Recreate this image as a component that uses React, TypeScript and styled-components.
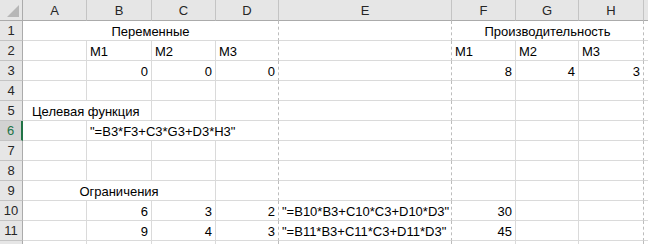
import React from 'react';
import styled, { createGlobalStyle, css } from 'styled-components';

type Align = 'left' | 'right' | 'center';

type CellData = {
    col: number;
    span?: number;
    text: string;
    align?: Align;
    indent?: number;
};

const GlobalStyle = createGlobalStyle`
html, body {
    margin: 0;
    padding: 0;
    background: #ffffff;
    overflow: hidden;
}
`;

const COLUMNS = ['A', 'B', 'C', 'D', 'E', 'F', 'G', 'H', 'I'];
const WIDTHS = [64, 65, 64, 63, 173, 64, 63, 65, 60];
// page break markers sit on the right edge of these columns
const DASHED = new Set([3, 4, 7]);
const ACTIVE_ROW = 6;
const VISIBLE_ROWS = 11;

const ROWS: CellData[][] = [
    [
        { col: 0, span: 4, text: 'Переменные', align: 'center' },
        { col: 5, span: 3, text: 'Производительность', align: 'center' },
    ],
    [
        { col: 1, text: 'M1' },
        { col: 2, text: 'M2' },
        { col: 3, text: 'M3' },
        { col: 5, text: 'M1' },
        { col: 6, text: 'M2' },
        { col: 7, text: 'M3' },
    ],
    [
        { col: 1, text: '0', align: 'right' },
        { col: 2, text: '0', align: 'right' },
        { col: 3, text: '0', align: 'right' },
        { col: 5, text: '8', align: 'right' },
        { col: 6, text: '4', align: 'right' },
        { col: 7, text: '3', align: 'right' },
    ],
    [],
    [{ col: 0, span: 2, text: 'Целевая функция', indent: 6 }],
    [{ col: 1, span: 3, text: '"=B3*F3+C3*G3+D3*H3"' }],
    [],
    [],
    [{ col: 0, span: 3, text: 'Ограничения', align: 'center' }],
    [
        { col: 1, text: '6', align: 'right' },
        { col: 2, text: '3', align: 'right' },
        { col: 3, text: '2', align: 'right' },
        { col: 4, text: '"=B10*B3+C10*C3+D10*D3"' },
        { col: 5, text: '30', align: 'right' },
    ],
    [
        { col: 1, text: '9', align: 'right' },
        { col: 2, text: '4', align: 'right' },
        { col: 3, text: '3', align: 'right' },
        { col: 4, text: '"=B11*B3+C11*C3+D11*D3"' },
        { col: 5, text: '45', align: 'right' },
    ],
    [],
];

const Sheet = styled.div`
    display: grid;
    grid-template-columns: 23px ${WIDTHS.map((w) => `${w}px`).join(' ')};
    grid-template-rows: 21px;
    grid-auto-rows: 20px;
    width: 648px;
    height: 244px;
    overflow: hidden;
    font-family: "Liberation Sans", Arial, sans-serif;
    font-size: 13px;
    color: #000000;
`;

const Corner = styled.div`
    position: relative;
    background: #e6e6e6;
    border-right: 1px solid #ababab;
    border-bottom: 1px solid #ababab;

    &::after {
        content: '';
        position: absolute;
        right: 3px;
        bottom: 3px;
        width: 0;
        height: 0;
        border-left: 12px solid transparent;
        border-bottom: 12px solid #b7b7b7;
    }
`;

const ColHeader = styled.div`
    display: flex;
    align-items: center;
    justify-content: center;
    background: #e6e6e6;
    border-right: 1px solid #c4c4c4;
    border-bottom: 1px solid #ababab;
    color: #262626;
    font-size: 13px;
    padding-top: 1px;
`;

const RowHeader = styled.div<{ $active?: boolean }>`
    display: flex;
    align-items: center;
    justify-content: center;
    background: #e6e6e6;
    border-right: 1px solid #ababab;
    border-bottom: 1px solid #c4c4c4;
    color: #262626;
    font-size: 13px;

    ${({ $active }) =>
        $active
            ? css`
                  background: #d2d2d2;
                  color: #217346;
                  border-right: 2px solid #217346;
              `
            : ``}
`;

const Cell = styled.div<{ $span: number; $align: Align; $dashed: boolean; $indent: number }>`
    grid-column: span ${({ $span }) => $span};
    display: flex;
    align-items: flex-end;
    justify-content: ${({ $align }) =>
        $align === 'right' ? 'flex-end' : $align === 'center' ? 'center' : 'flex-start'};
    padding: 0 3px 0 ${({ $indent }) => 3 + $indent}px;
    line-height: 16px;
    white-space: nowrap;
    overflow: visible;
    border-bottom: 1px solid #dadada;
    border-right: 1px ${({ $dashed }) => ($dashed ? 'dashed #bcbcbc' : 'solid #dadada')};
    min-width: 0;
`;

const App: React.FC = () => {
    const renderRow = (cells: CellData[], r: number) => {
        const out: React.ReactNode[] = [
            <RowHeader key={`h${r}`} $active={r + 1 === ACTIVE_ROW}>
                {r < VISIBLE_ROWS ? r + 1 : ''}
            </RowHeader>,
        ];
        let c = 0;
        while (c < COLUMNS.length) {
            const data = cells.find((x) => x.col === c);
            const span = data?.span ?? 1;
            const last = c + span - 1;
            out.push(
                <Cell
                    key={`${r}-${c}`}
                    $span={span}
                    $align={data?.align ?? 'left'}
                    $dashed={DASHED.has(last)}
                    $indent={data?.indent ?? 0}
                >
                    {data?.text}
                </Cell>
            );
            c += span;
        }
        return out;
    };

    return (
        <>
            <GlobalStyle />
            <Sheet>
                <Corner />
                {COLUMNS.map((name) => (
                    <ColHeader key={name}>{name === 'I' ? '' : name}</ColHeader>
                ))}
                {ROWS.map((cells, r) => renderRow(cells, r))}
            </Sheet>
        </>
    );
};

export default App;
